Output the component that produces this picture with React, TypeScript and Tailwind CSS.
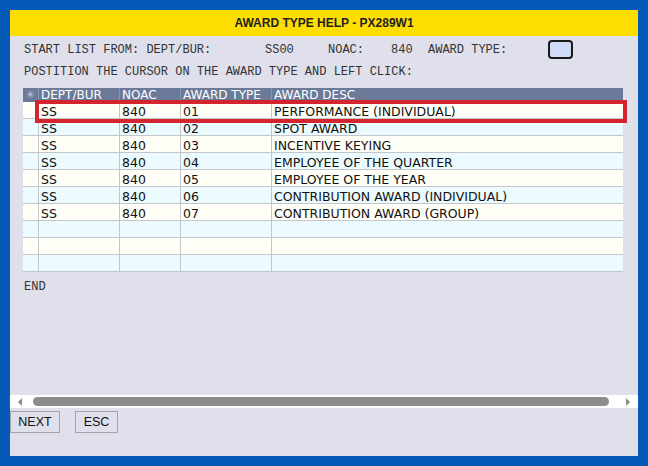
import React from 'react';

const rows = [
  { dept: 'SS', noac: '840', type: '01', desc: 'PERFORMANCE (INDIVIDUAL)' },
  { dept: 'SS', noac: '840', type: '02', desc: 'SPOT AWARD' },
  { dept: 'SS', noac: '840', type: '03', desc: 'INCENTIVE KEYING' },
  { dept: 'SS', noac: '840', type: '04', desc: 'EMPLOYEE OF THE QUARTER' },
  { dept: 'SS', noac: '840', type: '05', desc: 'EMPLOYEE OF THE YEAR' },
  { dept: 'SS', noac: '840', type: '06', desc: 'CONTRIBUTION AWARD (INDIVIDUAL)' },
  { dept: 'SS', noac: '840', type: '07', desc: 'CONTRIBUTION AWARD (GROUP)' },
  { dept: '', noac: '', type: '', desc: '' },
  { dept: '', noac: '', type: '', desc: '' },
  { dept: '', noac: '', type: '', desc: '' },
];

const mono = "font-['Liberation_Mono','Courier_New',monospace] text-[12px] text-[#333]";
const cell = 'h-[17px] border-r border-b border-[#c3c7cc] pl-[2px] pt-[2px] leading-[16px] overflow-hidden whitespace-nowrap';
const head = 'border-r border-[#8794ae] pl-[2px] leading-[14px] whitespace-nowrap';

export default function App() {
  return (
    <div className="w-[648px] h-[466px] bg-[#0559b7] p-[10px]">
      <div className="flex h-full flex-col bg-[#dfe0ec]">
        {/* Title bar */}
        <div className="flex h-[26px] items-center justify-center bg-[#fede00] font-['Liberation_Sans',Arial,sans-serif] text-[12px] font-bold text-[#222]">
          AWARD TYPE HELP - PX289W1
        </div>

        {/* Search line */}
        <div className={`mt-[4px] flex h-[19px] items-center pl-[14px] ${mono}`}>
          <span className="w-[241px]">START LIST FROM: DEPT/BUR:</span>
          <span className="w-[63px]">SS00</span>
          <span className="w-[63px]">NOAC:</span>
          <span className="w-[37px]">840</span>
          <span className="w-[120px]">AWARD TYPE:</span>
          <div className="h-[19px] w-[25px] rounded-[4px] border-2 border-[#1a1a1a] bg-[#cfdcf7]" />
        </div>
        <div className={`mt-[5px] h-[16px] pl-[14px] leading-[16px] ${mono}`}>
          POSTITION THE CURSOR ON THE AWARD TYPE AND LEFT CLICK:
        </div>

        {/* Grid */}
        <div className="relative ml-[13px] mt-[8px] w-[600px] font-['DejaVu_Sans',Verdana,sans-serif] text-[12.5px] text-[#111]">
          <div className="grid h-[14px] grid-cols-[16px_81px_61px_91px_351px] bg-[#6b7a99] text-[12px] text-white">
            <div className="border-r border-[#8794ae] pl-[3px] text-[10px] leading-[14px] text-[#c4cad8]">✳</div>
            <div className={head}>DEPT/BUR</div>
            <div className={head}>NOAC</div>
            <div className={head}>AWARD TYPE</div>
            <div className="pl-[2px] leading-[14px] whitespace-nowrap">AWARD DESC</div>
          </div>
          {rows.map((r, i) => (
            <div
              key={i}
              className={`grid grid-cols-[16px_81px_61px_91px_351px] ${i % 2 === 0 ? 'bg-[#fffff7]' : 'bg-[#ebfbfe]'}`}
            >
              <div className={cell} />
              <div className={cell}>{r.dept}</div>
              <div className={cell}>{r.noac}</div>
              <div className={cell}>{r.type}</div>
              <div className="h-[17px] border-b border-[#c3c7cc] pl-[2px] pt-[2px] leading-[16px] whitespace-nowrap">{r.desc}</div>
            </div>
          ))}
          {/* selected row highlight */}
          <div className="absolute left-[12px] top-[12px] h-[23px] w-[592px] border-[4px] border-[#d4252f]" />
        </div>

        <div className={`mt-[8px] h-[14px] pl-[14px] leading-[14px] ${mono}`}>END</div>

        <div className="flex-1" />

        {/* Horizontal scrollbar */}
        <div className="flex h-[13px] items-center bg-white px-[7px]">
          <svg width="6" height="8" viewBox="0 0 6 8" className="shrink-0">
            <path d="M5 0 L1 4 L5 8 Z" fill="#8a8a8a" />
          </svg>
          <div className="ml-[10px] h-[9px] w-[576px] rounded-full bg-[#8c8c8c]" />
          <div className="flex-1" />
          <svg width="6" height="8" viewBox="0 0 6 8" className="shrink-0">
            <path d="M1 0 L5 4 L1 8 Z" fill="#8a8a8a" />
          </svg>
        </div>

        {/* Buttons */}
        <div className="mb-[23px] mt-[3px] flex gap-[15px] font-['Liberation_Sans',Arial,sans-serif] text-[12.5px] text-[#111]">
          <button className="h-[22px] w-[50px] border border-[#a3a3ad] bg-[#dfe0ec]">NEXT</button>
          <button className="h-[22px] w-[43px] border border-[#a3a3ad] bg-[#dfe0ec]">ESC</button>
        </div>
      </div>
    </div>
  );
}
